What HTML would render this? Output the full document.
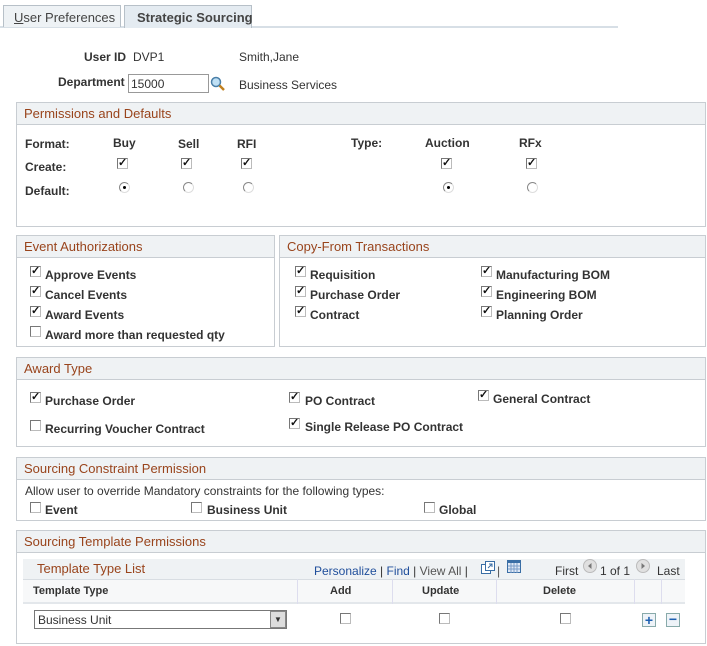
<!DOCTYPE html>
<html><head><meta charset="utf-8"><style>
*{box-sizing:border-box}
body{margin:0;width:707px;height:646px;background:#fff;font-family:"Liberation Sans",Arial,sans-serif;font-size:12px;color:#333;position:relative;overflow:hidden}
.a{position:absolute;white-space:nowrap}
.b{font-weight:bold}
.box{position:absolute;border:1px solid #c8cdd2;background:#fff}
.hd{position:absolute;left:0;right:0;top:0;height:22px;background:#eff2f4;border-bottom:1px solid #c8cdd2;color:#99441c;font-size:13px;padding:3px 0 0 7px;white-space:nowrap}
.cb{position:absolute;width:11px;height:11px;border:1px solid #777;border-right-color:#bbb;border-bottom-color:#bbb;background:#fff;font-size:11px;line-height:9px;text-align:center;font-weight:bold;color:#111}
.rd{position:absolute;width:11px;height:11px;border-radius:50%;border:1px solid #888;border-right-color:#ddd;border-bottom-color:#ddd;background:#fff}
.rd.on::after{content:"";position:absolute;left:3px;top:3px;width:3px;height:3px;border-radius:50%;background:#000}
.lnk{color:#1f4e9b}
</style></head><body>
<!-- tabs -->
<div class="a" style="left:0;top:26px;width:618px;height:2px;background:#d7dfe6"></div>
<div class="a" style="left:3px;top:5px;width:118px;height:22px;background:#eef2f5;border:1px solid #b7c0c8;border-bottom:none;font-size:13px;color:#444;padding:4px 0 0 10px"><u>U</u>ser Preferences</div>
<div class="a" style="left:124px;top:5px;width:128px;height:23px;background:#e4ebf1;border:1px solid #b7c0c8;border-bottom:none;font-size:13px;font-weight:bold;color:#444;padding:4px 0 0 12px">Strategic Sourcing</div>

<div class="a b" style="left:84px;top:50px">User ID</div>
<div class="a" style="left:133px;top:50px">DVP1</div>
<div class="a" style="left:239px;top:50px">Smith,Jane</div>
<div class="a b" style="left:58px;top:75px">Department</div>
<div class="a" style="left:128px;top:74px;width:81px;height:19px;border:1px solid #999;padding:2px 2px">15000</div>
<svg class="a" style="left:210px;top:76px" width="16" height="16"><circle cx="6" cy="6" r="4.5" fill="#bfe0f5" stroke="#4a7fa8" stroke-width="1.5"/><line x1="9.5" y1="9.5" x2="14" y2="14" stroke="#c08020" stroke-width="2.5"/></svg>
<div class="a" style="left:239px;top:78px">Business Services</div>

<!-- permissions -->
<div class="box" style="left:16px;top:102px;width:690px;height:125px"><div class="hd">Permissions and Defaults</div></div>
<div class="a b" style="left:25px;top:137px">Format:</div>
<div class="a b" style="left:113px;top:136px">Buy</div>
<div class="a b" style="left:178px;top:137px">Sell</div>
<div class="a b" style="left:237px;top:137px">RFI</div>
<div class="a b" style="left:351px;top:136px">Type:</div>
<div class="a b" style="left:425px;top:136px">Auction</div>
<div class="a b" style="left:519px;top:136px">RFx</div>
<div class="a b" style="left:25px;top:160px">Create:</div>
<div class="a b" style="left:25px;top:184px">Default:</div>
<div class="cb" style="left:117px;top:158px">✓</div>
<div class="cb" style="left:181px;top:158px">✓</div>
<div class="cb" style="left:241px;top:158px">✓</div>
<div class="cb" style="left:441px;top:158px">✓</div>
<div class="cb" style="left:526px;top:158px">✓</div>
<div class="rd on" style="left:119px;top:182px"></div>
<div class="rd" style="left:183px;top:182px"></div>
<div class="rd" style="left:243px;top:182px"></div>
<div class="rd on" style="left:443px;top:182px"></div>
<div class="rd" style="left:527px;top:182px"></div>

<!-- event auth -->
<div class="box" style="left:16px;top:235px;width:259px;height:112px"><div class="hd">Event Authorizations</div></div>
<div class="box" style="left:279px;top:235px;width:427px;height:112px"><div class="hd">Copy-From Transactions</div></div>
<div class="cb" style="left:30px;top:266px">✓</div><div class="a b" style="left:45px;top:268px">Approve Events</div>
<div class="cb" style="left:30px;top:286px">✓</div><div class="a b" style="left:45px;top:288px">Cancel Events</div>
<div class="cb" style="left:30px;top:306px">✓</div><div class="a b" style="left:45px;top:308px">Award Events</div>
<div class="cb" style="left:30px;top:326px"></div><div class="a b" style="left:45px;top:328px">Award more than requested qty</div>
<div class="cb" style="left:295px;top:266px">✓</div><div class="a b" style="left:310px;top:268px">Requisition</div>
<div class="cb" style="left:295px;top:286px">✓</div><div class="a b" style="left:310px;top:288px">Purchase Order</div>
<div class="cb" style="left:295px;top:306px">✓</div><div class="a b" style="left:310px;top:308px">Contract</div>
<div class="cb" style="left:481px;top:266px">✓</div><div class="a b" style="left:496px;top:268px">Manufacturing BOM</div>
<div class="cb" style="left:481px;top:286px">✓</div><div class="a b" style="left:496px;top:288px">Engineering BOM</div>
<div class="cb" style="left:481px;top:306px">✓</div><div class="a b" style="left:496px;top:308px">Planning Order</div>

<!-- award -->
<div class="box" style="left:16px;top:357px;width:690px;height:90px"><div class="hd">Award Type</div></div>
<div class="cb" style="left:30px;top:392px">✓</div><div class="a b" style="left:45px;top:394px">Purchase Order</div>
<div class="cb" style="left:30px;top:420px"></div><div class="a b" style="left:45px;top:422px">Recurring Voucher Contract</div>
<div class="cb" style="left:289px;top:392px">✓</div><div class="a b" style="left:305px;top:394px">PO Contract</div>
<div class="cb" style="left:289px;top:418px">✓</div><div class="a b" style="left:305px;top:420px">Single Release PO Contract</div>
<div class="cb" style="left:478px;top:390px">✓</div><div class="a b" style="left:493px;top:392px">General Contract</div>

<!-- constraint -->
<div class="box" style="left:16px;top:457px;width:690px;height:64px"><div class="hd">Sourcing Constraint Permission</div></div>
<div class="a" style="left:25px;top:484px">Allow user to override Mandatory constraints for the following types:</div>
<div class="cb" style="left:30px;top:502px"></div><div class="a b" style="left:45px;top:503px">Event</div>
<div class="cb" style="left:191px;top:502px"></div><div class="a b" style="left:207px;top:503px">Business Unit</div>
<div class="cb" style="left:424px;top:502px"></div><div class="a b" style="left:439px;top:503px">Global</div>

<!-- template -->
<div class="box" style="left:16px;top:530px;width:690px;height:114px"><div class="hd">Sourcing Template Permissions</div></div>
<div class="a" style="left:23px;top:559px;width:662px;height:20px;background:#eff2f4"></div>
<div class="a" style="left:37px;top:561px;color:#99441c;font-size:13px">Template Type List</div>
<div class="a" style="left:314px;top:564px"><span class="lnk">Personalize</span> | <span class="lnk">Find</span> | <span style="color:#555">View All</span> |</div>
<svg class="a" style="left:481px;top:561px" width="14" height="13"><rect x="0.5" y="3.5" width="9" height="9" fill="#fff" stroke="#3a6ea5"/><rect x="4.5" y="0.5" width="9" height="9" fill="#fff" stroke="#3a6ea5"/><path d="M7 7l4-4M8 3h3v3" stroke="#3a6ea5" fill="none"/></svg>
<div class="a" style="left:497px;top:564px;color:#555">|</div>
<svg class="a" style="left:507px;top:560px" width="14" height="13"><rect x="0.5" y="0.5" width="13" height="12" fill="#dfe8f5" stroke="#3a6ea5"/><rect x="1" y="1" width="12" height="2" fill="#3a6ea5"/><path d="M1 6h12M1 9h12M4 3v10M7 3v10M10 3v10" stroke="#7a9cc8"/></svg>
<div class="a" style="left:555px;top:564px;color:#333">First</div>
<svg class="a" style="left:583px;top:559px" width="14" height="14"><circle cx="7" cy="7" r="6.5" fill="#e0e0e0" stroke="#bbb"/><path d="M8.5 4L5 7l3.5 3z" fill="#777"/></svg>
<div class="a" style="left:600px;top:564px">1 of 1</div>
<svg class="a" style="left:636px;top:559px" width="14" height="14"><circle cx="7" cy="7" r="6.5" fill="#e0e0e0" stroke="#bbb"/><path d="M5.5 4L9 7l-3.5 3z" fill="#777"/></svg>
<div class="a" style="left:657px;top:564px">Last</div>
<div class="a" style="left:23px;top:579px;width:662px;height:25px;background:#f7f8f9;border-top:1px solid #d8dde2;border-bottom:2px solid #e3e7eb"></div>
<div class="a" style="left:297px;top:579px;width:1px;height:25px;background:#dde"></div>
<div class="a" style="left:392px;top:579px;width:1px;height:25px;background:#dde"></div>
<div class="a" style="left:496px;top:579px;width:1px;height:25px;background:#dde"></div>
<div class="a" style="left:634px;top:579px;width:1px;height:25px;background:#dde"></div>
<div class="a" style="left:661px;top:579px;width:1px;height:25px;background:#dde"></div>
<div class="a b" style="left:33px;top:585px;font-size:11px">Template Type</div>
<div class="a b" style="left:330px;top:585px;font-size:11px">Add</div>
<div class="a b" style="left:422px;top:585px;font-size:11px">Update</div>
<div class="a b" style="left:543px;top:585px;font-size:11px">Delete</div>
<div class="a" style="left:34px;top:610px;width:253px;height:19px;border:1px solid #777;padding:2px 3px;font-size:12px">Business Unit</div>
<div class="a" style="left:270px;top:611px;width:16px;height:17px;background:#ddd;border:1px solid #888;font-size:8px;text-align:center;line-height:16px">▼</div>
<div class="cb" style="left:340px;top:613px"></div>
<div class="cb" style="left:439px;top:613px"></div>
<div class="cb" style="left:560px;top:613px"></div>
<div class="a" style="left:642px;top:613px;width:14px;height:14px;border:1px solid #8aa;background:#eef3f8;color:#1d5fb0;font-weight:bold;font-size:14px;line-height:12px;text-align:center">+</div>
<div class="a" style="left:666px;top:613px;width:14px;height:14px;border:1px solid #8aa;background:#eef3f8;color:#1d5fb0;font-weight:bold;font-size:14px;line-height:11px;text-align:center">−</div>
</body></html>
